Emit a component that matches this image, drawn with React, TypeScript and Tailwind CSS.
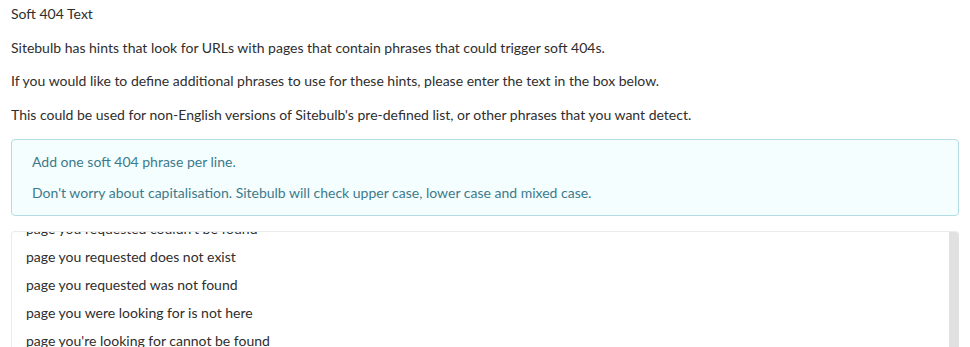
import React from 'react';

const phrases = [
  "page you requested couldn't be found",
  'page you requested does not exist',
  'page you requested was not found',
  'page you were looking for is not here',
  "page you're looking for cannot be found",
  'sorry, this page is not available',
];

export default function App() {
  return (
    <div className="h-[347px] overflow-hidden bg-white px-[11px] pt-[4px] font-['Lato',sans-serif] text-[14px] text-[#2e2e2e]">
      <p className="leading-[20px]">Soft 404 Text</p>
      <p className="mt-[14px] leading-[20px]">
        Sitebulb has hints that look for URLs with pages that contain phrases that could trigger soft 404s.
      </p>
      <p className="mt-[13px] leading-[20px]">
        If you would like to define additional phrases to use for these hints, please enter the text in the box below.
      </p>
      <p className="mt-[14px] leading-[20px]">
        This could be used for non-English versions of Sitebulb's pre-defined list, or other phrases that you want detect.
      </p>

      {/* Info box */}
      <div className="mt-[14px] rounded-[4px] border border-[#b4dce4] bg-[#f5fefe] px-[20px] pt-[12px] pb-[12px] text-[#3c7a8c]">
        <p className="leading-[20px]">Add one soft 404 phrase per line.</p>
        <p className="mt-[11px] leading-[20px]">
          Don't worry about capitalisation. Sitebulb will check upper case, lower case and mixed case.
        </p>
      </div>

      {/* Phrase textarea */}
      <div className="mt-[15px] flex h-[140px] overflow-hidden rounded-t-[4px] border-t border-l border-[#ececec]">
        <div className="flex-1 overflow-hidden pl-[14px]">
          <div className="-mt-[17px]">
            {phrases.map(p => (
              <div key={p} className="leading-[28px]">
                {p}
              </div>
            ))}
          </div>
        </div>
        <div className="w-[10px] bg-[#e1e1e1]" />
      </div>
    </div>
  );
}
